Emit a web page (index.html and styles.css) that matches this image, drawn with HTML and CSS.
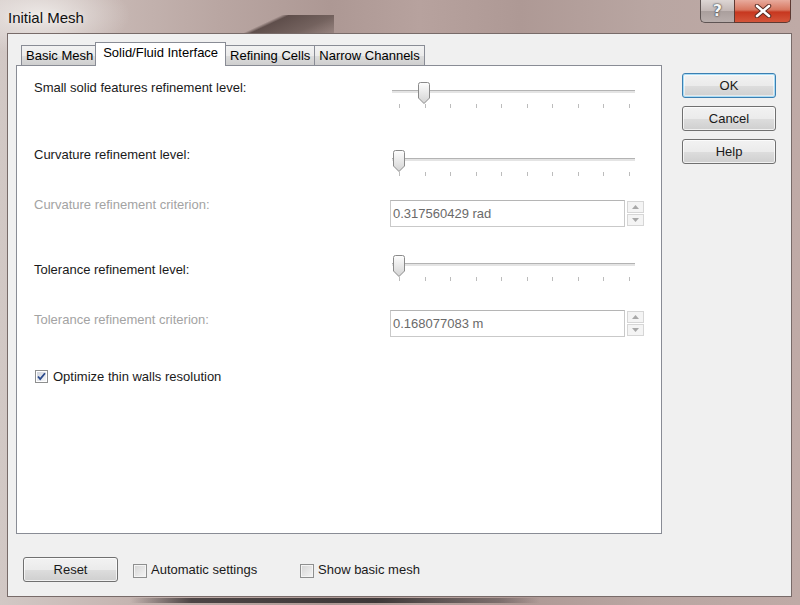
FILE: index.html
```html
<!DOCTYPE html>
<html>
<head>
<meta charset="utf-8">
<link rel="stylesheet" href="styles.css">
</head>
<body>
<div class="window">
  <div class="titlebar">
    <span class="title">Initial Mesh</span>
    <div class="caption-buttons">
      <div class="cap-help">?</div>
      <div class="cap-close">
        <svg width="22" height="14" viewBox="0 0 22 14"><path d="M5 2 L17 12 M17 2 L5 12" stroke="#5a2a22" stroke-width="4.5" stroke-linecap="round"/><path d="M5 2 L17 12 M17 2 L5 12" stroke="#ffffff" stroke-width="2.6" stroke-linecap="round"/></svg>
      </div>
    </div>
  </div>
  <div class="client">
    <div class="main">
      <div class="tabsection">
        <div class="tabstrip">
          <div class="tab">Basic Mesh</div>
          <div class="tab active">Solid/Fluid Interface</div>
          <div class="tab">Refining Cells</div>
          <div class="tab">Narrow Channels</div>
        </div>
        <div class="panel">
          <div class="row row1">
            <div class="label">Small solid features refinement level:</div>
            <div class="slider">
              <div class="track"></div>
              <div class="ticks"><i></i><i></i><i></i><i></i><i></i><i></i><i></i><i></i><i></i><i></i></div>
              <svg class="thumb thumb-l1" width="12" height="22" viewBox="0 0 12 22"><defs><linearGradient id="tg1" x1="0" y1="0" x2="0" y2="1"><stop offset="0" stop-color="#fefefe"/><stop offset="1" stop-color="#d3d3d3"/></linearGradient></defs><path d="M0.5 2.5 Q0.5 0.5 2.5 0.5 H9.5 Q11.5 0.5 11.5 2.5 V16 L6 21.5 L0.5 16 Z" fill="url(#tg1)" stroke="#8a8a8a"/></svg>
            </div>
          </div>
          <div class="row row2">
            <div class="label">Curvature refinement level:</div>
            <div class="slider">
              <div class="track"></div>
              <div class="ticks"><i></i><i></i><i></i><i></i><i></i><i></i><i></i><i></i><i></i><i></i></div>
              <svg class="thumb thumb-l0" width="12" height="22" viewBox="0 0 12 22"><defs><linearGradient id="tg2" x1="0" y1="0" x2="0" y2="1"><stop offset="0" stop-color="#fefefe"/><stop offset="1" stop-color="#d3d3d3"/></linearGradient></defs><path d="M0.5 2.5 Q0.5 0.5 2.5 0.5 H9.5 Q11.5 0.5 11.5 2.5 V16 L6 21.5 L0.5 16 Z" fill="url(#tg2)" stroke="#8a8a8a"/></svg>
            </div>
          </div>
          <div class="row row3">
            <div class="label disabled">Curvature refinement criterion:</div>
            <div class="spin">
              <div class="spin-input">0.317560429 rad</div>
              <div class="spin-btns">
                <div class="spin-btn"><svg width="7" height="4" viewBox="0 0 7 4"><path d="M0 4 L3.5 0 L7 4 Z" fill="#a8a8a8"/></svg></div>
                <div class="spin-btn"><svg width="7" height="4" viewBox="0 0 7 4"><path d="M0 0 L3.5 4 L7 0 Z" fill="#a8a8a8"/></svg></div>
              </div>
            </div>
          </div>
          <div class="row row4">
            <div class="label">Tolerance refinement level:</div>
            <div class="slider">
              <div class="track"></div>
              <div class="ticks"><i></i><i></i><i></i><i></i><i></i><i></i><i></i><i></i><i></i><i></i></div>
              <svg class="thumb thumb-l0" width="12" height="22" viewBox="0 0 12 22"><defs><linearGradient id="tg3" x1="0" y1="0" x2="0" y2="1"><stop offset="0" stop-color="#fefefe"/><stop offset="1" stop-color="#d3d3d3"/></linearGradient></defs><path d="M0.5 2.5 Q0.5 0.5 2.5 0.5 H9.5 Q11.5 0.5 11.5 2.5 V16 L6 21.5 L0.5 16 Z" fill="url(#tg3)" stroke="#8a8a8a"/></svg>
            </div>
          </div>
          <div class="row row5">
            <div class="label disabled">Tolerance refinement criterion:</div>
            <div class="spin">
              <div class="spin-input">0.168077083 m</div>
              <div class="spin-btns">
                <div class="spin-btn"><svg width="7" height="4" viewBox="0 0 7 4"><path d="M0 4 L3.5 0 L7 4 Z" fill="#a8a8a8"/></svg></div>
                <div class="spin-btn"><svg width="7" height="4" viewBox="0 0 7 4"><path d="M0 0 L3.5 4 L7 0 Z" fill="#a8a8a8"/></svg></div>
              </div>
            </div>
          </div>
          <div class="check-row">
            <span class="checkbox checked">
              <svg width="13" height="13" viewBox="0 0 13 13"><defs><linearGradient id="cbg" x1="0" y1="0" x2="1" y2="1"><stop offset="0" stop-color="#cfd3dc"/><stop offset="1" stop-color="#f6f7f9"/></linearGradient></defs><rect x="0.5" y="0.5" width="12" height="12" fill="#fff" stroke="#8e8f8f"/><rect x="2" y="2" width="9" height="9" fill="url(#cbg)"/><path d="M3 6.5 L5.2 9 L10 3.2" fill="none" stroke="#2a4a8c" stroke-width="1.8"/></svg>
            </span>
            <span class="check-text">Optimize thin walls resolution</span>
          </div>
        </div>
      </div>
      <div class="side-buttons">
        <div class="btn default">OK</div>
        <div class="btn">Cancel</div>
        <div class="btn">Help</div>
      </div>
    </div>
    <div class="footer">
      <div class="btn reset">Reset</div>
      <div class="fcheck fcheck-auto"><span class="box"></span><span>Automatic settings</span></div>
      <div class="fcheck"><span class="box"></span><span>Show basic mesh</span></div>
    </div>
  </div>
</div>
</body>
</html>
```
FILE: styles.css
```css
* { box-sizing: border-box; }
html, body { margin: 0; padding: 0; }
body {
  width: 800px;
  height: 605px;
  overflow: hidden;
  font-family: "Liberation Sans", Arial, sans-serif;
  font-size: 13px;
  color: #1a1a1a;
}
.window {
  width: 800px;
  height: 605px;
  display: flex;
  flex-direction: column;
  background:
    linear-gradient(to right, rgba(70,62,62,0), #4d4545 15%, #3e3838 60%, rgba(90,80,80,0.6) 90%, rgba(90,80,80,0)) 130px 598px / 410px 5px no-repeat,
    linear-gradient(155deg, rgba(80,64,61,0) 0%, rgba(80,64,61,0) 42%, rgba(80,64,61,0.85) 47%, rgba(90,74,70,0.7) 75%, rgba(110,94,90,0.3) 100%) 214px 15px / 120px 19px no-repeat,
    radial-gradient(ellipse 90px 40px at 40px 15px, rgba(240,236,234,0.9), rgba(240,236,234,0) 100%),
    linear-gradient(to right, #d2c8c5 0px, #c6b6b2 120px, #b9a6a2 220px, #ad9894 330px, #b7a29e 420px, #ae9995 520px, #b9a6a2 650px, #bfaaa6 800px);
}
.titlebar {
  height: 33px;
  display: flex;
  align-items: flex-start;
  padding-left: 8px;
}
.title {
  font-size: 15px;
  color: #111;
  margin-top: 9px;
  text-shadow: 0 0 6px rgba(255,255,255,0.8);
}
.caption-buttons {
  margin-left: auto;
  margin-right: 9px;
  display: flex;
  height: 23px;
}
.cap-help {
  width: 34px;
  height: 23px;
  border: 1px solid #5e5453;
  border-top: none;
  border-right: none;
  border-radius: 0 0 0 5px;
  background: linear-gradient(#ddd6d4, #c2b7b5 50%, #aa9f9d 51%, #b9aeac);
  color: #f4f4f4;
  font-family: "DejaVu Sans", sans-serif;
  font-weight: bold;
  font-size: 16px;
  text-align: center;
  line-height: 21px;
  text-shadow: 0 0 2px #333, 0 0 1px #333;
}
.cap-close {
  width: 57px;
  height: 23px;
  border: 1px solid #5e3a33;
  border-top: none;
  border-radius: 0 0 5px 0;
  background: linear-gradient(#e8ab9d, #d7765f 45%, #c7371f 55%, #d4553a);
  display: flex;
  align-items: center;
  justify-content: center;
}
.client {
  margin: 0 8px 0 7px;
  height: 564px;
  border: 1px solid #786b69;
  background: #f0f0f0;
  display: flex;
  flex-direction: column;
}
.main {
  display: flex;
  padding: 8px 0 0 8px;
}
.tabsection {
  width: 646px;
  display: flex;
  flex-direction: column;
}
.tabstrip {
  height: 23px;
  display: flex;
  align-items: flex-end;
  padding-left: 5px;
}
.tab {
  height: 20px;
  padding: 0 4px;
  border: 1px solid #898c95;
  border-bottom: none;
  margin-right: -1px;
  background: linear-gradient(#f2f2f2, #ebebeb 50%, #dddddd 51%, #cfcfcf);
  line-height: 19px;
  white-space: nowrap;
  color: #000;
}
.tab.active {
  height: 24px;
  margin: 0 -1px -1px -2px;
  padding: 0 7px;
  background: #fff;
  position: relative;
  z-index: 2;
  line-height: 19px;
}
.panel {
  height: 469px;
  border: 1px solid #898c95;
  background: #fff;
  padding: 14px 0 0 17px;
  display: flex;
  flex-direction: column;
}
.row {
  display: flex;
  align-items: flex-start;
}
.label {
  width: 356px;
  line-height: 16px;
  color: #1a1a1a;
}
.label.disabled { color: #a3a3a3; }
.row1 .slider { margin-top: 2px; }
.row2 { margin-top: 33px; }
.row2 .slider { margin-top: 3px; }
.row3 { margin-top: 15px; }
.row3 .spin { margin-top: 3px; }
.row4 { margin-top: 28px; }
.row4 .label { margin-top: 7px; }
.row5 { margin-top: 23px; }
.row5 .label { margin-top: 2px; }
.slider {
  position: relative;
  width: 246px;
  height: 32px;
}
.track {
  position: absolute;
  left: 2px;
  right: 1px;
  top: 8px;
  height: 3px;
  background: #e4e4e4;
  border-top: 1px solid #b3b3b3;
}
.ticks {
  position: absolute;
  left: 9px;
  width: 231px;
  top: 22px;
  display: flex;
  justify-content: space-between;
}
.ticks i {
  width: 1px;
  height: 4px;
  background: #bcbcbc;
}
.thumb {
  position: absolute;
  top: 0;
}
.thumb-l0 { left: 3px; }
.thumb-l1 { left: 28px; }
.spin {
  display: flex;
}
.spin-input {
  width: 235px;
  height: 27px;
  border: 1px solid #c9c9c9;
  border-top-color: #b5b5b5;
  background: #fff;
  color: #6a6a6a;
  padding-left: 2px;
  line-height: 25px;
}
.spin-btns {
  margin-left: 2px;
  margin-top: 1px;
  width: 17px;
  display: flex;
  flex-direction: column;
}
.spin-btn {
  height: 12px;
  border: 1px solid #d6d6d6;
  background: #f4f4f4;
  display: flex;
  align-items: center;
  justify-content: center;
}
.spin-btn + .spin-btn { margin-top: 1px; }
.check-row {
  margin-top: 31px;
  margin-left: 1px;
  display: flex;
  align-items: center;
  height: 16px;
}
.checkbox { display: flex; }
.check-text { margin-left: 5px; color: #1a1a1a; }
.side-buttons {
  margin-left: 20px;
  margin-top: 31px;
  display: flex;
  flex-direction: column;
  gap: 8px;
}
.btn {
  width: 94px;
  height: 25px;
  border: 1px solid #707070;
  border-radius: 3px;
  background: linear-gradient(#f2f2f2, #ebebeb 50%, #dddddd 51%, #cfcfcf);
  text-align: center;
  line-height: 23px;
  color: #1a1a1a;
  box-shadow: inset 0 0 0 1px rgba(255,255,255,0.7);
}
.btn.default {
  border-color: #3c7fb1;
  box-shadow: inset 0 0 0 1px #a8dcf6, inset 0 0 0 2px rgba(255,255,255,0.5);
}
.footer {
  margin-top: 23px;
  padding-left: 15px;
  display: flex;
  align-items: center;
  height: 25px;
}
.btn.reset { width: 95px; }
.fcheck {
  display: flex;
  align-items: center;
  margin-left: 15px;
}
.fcheck-auto { width: 167px; margin-left: 15px; }
.fcheck-auto + .fcheck { margin-left: 0; }
.fcheck .box {
  width: 14px;
  height: 14px;
  border: 1px solid #8e8f8f;
  background: linear-gradient(135deg, #d4d4d4, #f5f5f5);
  box-shadow: inset 0 0 0 1px #f4f4f4;
  margin-right: 4px;
  margin-top: 2px;
}
```
